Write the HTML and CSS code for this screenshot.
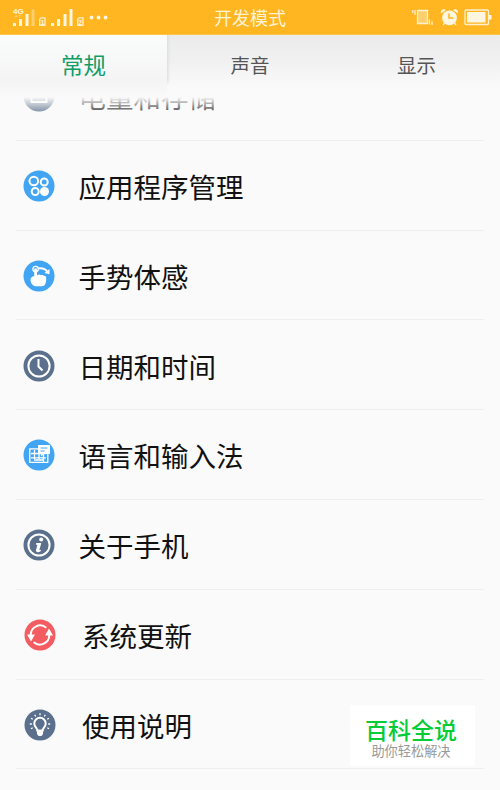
FILE: index.html
```html
<!DOCTYPE html>
<html lang="zh-CN">
<head>
    <meta charset="UTF-8">
    <meta name="viewport" content="width=device-width, initial-scale=1.0">
    <title>开发模式</title>
    <link rel="stylesheet" href="styles.css">
</head>
<body>

<div class="screen">
    <header class="status-bar">
        <svg class="signal" width="100" height="26" viewBox="0 0 100 26">
            <text x="0" y="8.500" font-size="8">4G</text>
            <path d="M0 18h3v3H0zM6 14h3v7H6zM12.500 9h3v12h-3z"/>
            <path class="dim" d="M18.500 4.500h3V21h-3zM1 12l2-2 2 2zM5 10h3l-1.500 2z"/>
            <path d="M38 18h3v3h-3zM44 14h3v7h-3zM50.500 9h3v12h-3zM56.500 4h3v17h-3z"/>
            <path class="outline" d="M28 12.800h4v7.500h-5.300v-6zM66 12.800h4v7.500h-5.300v-6z"/>
            <text x="27.500" y="19.500" font-size="7">1</text>
            <text x="65.300" y="19.500" font-size="7">2</text>
            <circle cx="78.500" cy="12.500" r="1.900"/>
            <circle cx="85.500" cy="12.500" r="1.900"/>
            <circle cx="92.500" cy="12.500" r="1.900"/>
        </svg>
        <h1 class="title">开发模式</h1>
        <svg class="device" width="82" height="20" viewBox="0 0 82 20">
            <path class="dim" d="M6 3h9v12H6z"/>
            <path class="outline" d="M5.500 2.500h10v13h-10z"/>
            <path class="outline" d="M.7 2v3M3 2v5M17.500 11.500v5M20 13.500v3.500"/>
            <circle class="clock-face" cx="37.500" cy="9.800" r="7.400"/>
            <path class="clock-hands" d="M37 5.500V10h4.500"/>
            <path class="outline" d="M32.500 15l-1.500 2M42.500 15l1.500 2"/>
            <path d="M29 5.500c-1-3 2.500-5.500 5-3.500zM46 5.500c1-3-2.500-5.500-5-3.500z"/>
            <rect class="outline" x="53" y="2" width="23.500" height="14.500" rx="1"/>
            <path d="M55 4h18.500v10.500H55zM77 7h2.500v4.500H77z"/>
        </svg>
    </header>

    <nav class="tabs">
        <a class="tab active">常规</a>
        <a class="tab">声音</a>
        <a class="tab">显示</a>
    </nav>

    <main class="list-view">
        <ul class="list">
            <li class="row">
                <svg class="icon slate" viewBox="0 0 32 32">
                    <circle class="disc" cx="16" cy="16" r="15.500"/>
                    <path class="line" d="M8.500 9v13h15V9M13 17v-5M19 17v-5"/>
                </svg>
                <span class="label">电量和存储</span>
            </li>
            <li class="row">
                <svg class="icon blue" viewBox="0 0 32 32">
                    <circle class="disc" cx="16" cy="16" r="15.500"/>
                    <circle class="line" cx="10.800" cy="11" r="4.300"/>
                    <circle class="line" cx="21.200" cy="12" r="3.500"/>
                    <circle class="line" cx="12.200" cy="21.500" r="3.500"/>
                    <circle class="fill" cx="21.500" cy="21.500" r="4.500"/>
                </svg>
                <span class="label">应用程序管理</span>
            </li>
            <li class="row">
                <svg class="icon blue" viewBox="0 0 32 32">
                    <circle class="disc" cx="16" cy="16" r="15.500"/>
                    <path class="fill" d="M11.200 9.500c0-1.800 2.800-1.800 2.800 0v5.700c2-1 3-.6 4 .1 1.500-.6 2.500-.2 3 .5 1.800 0 2.300 1.200 2.200 3 0 4-1.200 7.500-4.200 7.500h-6.500c-3 0-5-4-5-6.500 0-1.800 1.500-3.500 3.700-3.500z"/>
                    <circle class="line thin" cx="12.600" cy="9" r="2.700"/>
                    <path class="line" d="M15 8.500c4-.7 7.500.5 9.500 3.500"/>
                    <path class="fill" d="M26.500 9v5.300l-5-1.300z"/>
                </svg>
                <span class="label">手势体感</span>
            </li>
            <li class="row">
                <svg class="icon slate" viewBox="0 0 32 32">
                    <circle class="disc" cx="16" cy="16" r="15.500"/>
                    <circle class="line" cx="16" cy="16" r="10.600"/>
                    <path class="line" d="M15.500 9v7.500l4 4"/>
                </svg>
                <span class="label">日期和时间</span>
            </li>
            <li class="row">
                <svg class="icon blue" viewBox="0 0 32 32">
                    <circle class="disc" cx="16" cy="16" r="15.500"/>
                    <path class="line thin" d="M6.800 9.800h18v13.500h-18zM8 14.500h15M8 18.800h15M11.500 11v9M16 11v9M20.500 15v8M11 21h10"/>
                    <path class="fill" d="M15 6h12v9h-6l-3 2.500V15h-3z"/>
                    <path class="detail" d="M17.500 9h7M17.500 12h4"/>
                </svg>
                <span class="label">语言和输入法</span>
            </li>
            <li class="row">
                <svg class="icon slate" viewBox="0 0 32 32">
                    <circle class="disc" cx="16" cy="16" r="15.500"/>
                    <circle class="line" cx="16" cy="16" r="10.600"/>
                    <circle class="fill" cx="18.200" cy="10.500" r="2"/>
                    <path class="fill" d="M13.300 14h5l-2 7.300 1.700-.5-.4 1.500c-2 1.400-5.200 1.300-4.600-1.200l1.500-5.400h-1.700z"/>
                </svg>
                <span class="label">关于手机</span>
            </li>
            <li class="row shifted">
                <svg class="icon red" viewBox="0 0 32 32">
                    <circle class="disc" cx="16" cy="16" r="15.500"/>
                    <path class="line" d="M22.300 8.700A9.500 9.500 0 0 0 6.700 16M9.700 23.300A9.500 9.500 0 0 0 25.300 16"/>
                    <path class="fill" d="M3 15.500h8l-4 7zM21 16.500h8l-4-7z"/>
                </svg>
                <span class="label">系统更新</span>
            </li>
            <li class="row shifted">
                <svg class="icon slate" viewBox="0 0 32 32">
                    <circle class="disc" cx="16" cy="16" r="15.500"/>
                    <path class="line" d="M13.300 21.500c0-2.500-3-3.500-3-7a5.700 5.700 0 0 1 11.400 0c0 3.500-3 4.500-3 7z"/>
                    <path class="fill" d="M13 22h6v3l-1.500 2h-3L13 25z"/>
                    <path class="line thin" d="M16 4.300v2M10.700 5.700l1 1.800M21.300 5.700l-1 1.800M7 9.300l1.800 1M25 9.300l-1.800 1M5.800 15h2M24.200 15h2M7 19.800l1.700-1M25 19.800l-1.700-1"/>
                </svg>
                <span class="label">使用说明</span>
            </li>
        </ul>
    </main>

    <aside class="badge">
        <strong class="badge-name">百科全说</strong>
        <span class="badge-text">助你轻松解决</span>
    </aside>
</div>

</body>
</html>
```

FILE: styles.css
```css
* {
    box-sizing: border-box;
}
body {
    margin: 0;
    font-family: "Noto Sans CJK SC", sans-serif;
    background-color: #fafafa;
}
.screen {
    position: relative;
    display: flex;
    flex-direction: column;
    width: 500px;
    height: 790px;
    overflow: hidden;
}

/* Status bar */
.status-bar {
    display: grid;
    grid-template-columns: 1fr auto 1fr;
    align-items: center;
    height: 35px;
    flex-shrink: 0;
    padding: 0 6px 0 13px;
    background-color: #ffb621;
    border-bottom: 1px solid #ffc44c;
    fill: #fff6e0;
}
.title {
    margin: 0 0 0 -7px;
    font-size: 18px;
    font-weight: 400;
    line-height: 34px;
    color: #fff3d6;
}
.signal {
    font-family: "Liberation Sans", sans-serif;
    font-weight: 700;
    margin-top: 1px;
}
.device {
    justify-self: end;
    margin-top: 1px;
}
.dim {
    opacity: 0.4;
}
.outline {
    fill: none;
    stroke: #fff0cf;
    stroke-width: 1.3;
}
.clock-face {
    fill: #fff6e0;
}
.clock-hands {
    fill: none;
    stroke: #ffb621;
    stroke-width: 1.6;
}

/* Tabs */
.tabs {
    display: grid;
    grid-template-columns: 167px 166px 167px;
    height: 62px;
    flex-shrink: 0;
    overflow: hidden;
    background: linear-gradient(#ebebeb, #f0f0f0 40%, #fafafa 85%);
}
.tab {
    font-size: 19.5px;
    line-height: 60px;
    text-align: center;
    color: #555;
}
.tab.active {
    font-size: 22.5px;
    line-height: 59px;
    color: #109d68;
    background: linear-gradient(#fafcfb, #f4f4f4 75%, #fafafa);
    box-shadow: 1px -14px 3px 0 #d8d8d8;
}

/* Settings list */
.list-view {
    position: relative;
    flex: 1;
    overflow: hidden;
}
.list-view::before {
    content: "";
    position: absolute;
    top: 0;
    left: 0;
    right: 0;
    height: 20px;
    background: linear-gradient(#fafafa, rgba(250, 250, 250, 0));
}
.list {
    margin: -46px 16px 0;
    padding: 0;
    list-style: none;
}
.row {
    display: flex;
    align-items: center;
    gap: 24px;
    height: 89.8px;
    padding: 1.5px 0 0 6.5px;
    border-bottom: 1px solid #eee;
}
.row.shifted {
    padding-left: 8px;
    gap: 26px;
}
.icon {
    width: 32px;
    height: 32px;
}
.label {
    font-size: 27.5px;
    line-height: 40px;
    color: #111;
}
.slate {
    color: #5b708c;
}
.blue {
    color: #42a5f3;
}
.red {
    color: #f35c60;
}
.disc {
    fill: currentColor;
}
.line {
    fill: none;
    stroke: #fff;
    stroke-width: 2;
}
.thin {
    stroke-width: 1.3;
}
.fill {
    fill: #fff;
}
.detail {
    fill: none;
    stroke: currentColor;
    stroke-width: 1.2;
}

/* Corner badge */
.badge {
    position: absolute;
    left: 350px;
    top: 705px;
    display: flex;
    flex-direction: column;
    align-items: center;
    width: 125px;
    height: 61px;
    padding-top: 12px;
    background-color: #fff;
}
.badge-name {
    margin-left: -3px;
    font-size: 23px;
    line-height: 25px;
    font-weight: 500;
    color: #06cc36;
}
.badge-text {
    margin-left: -3px;
    font-size: 13.2px;
    line-height: 18px;
    color: #999;
}
```
